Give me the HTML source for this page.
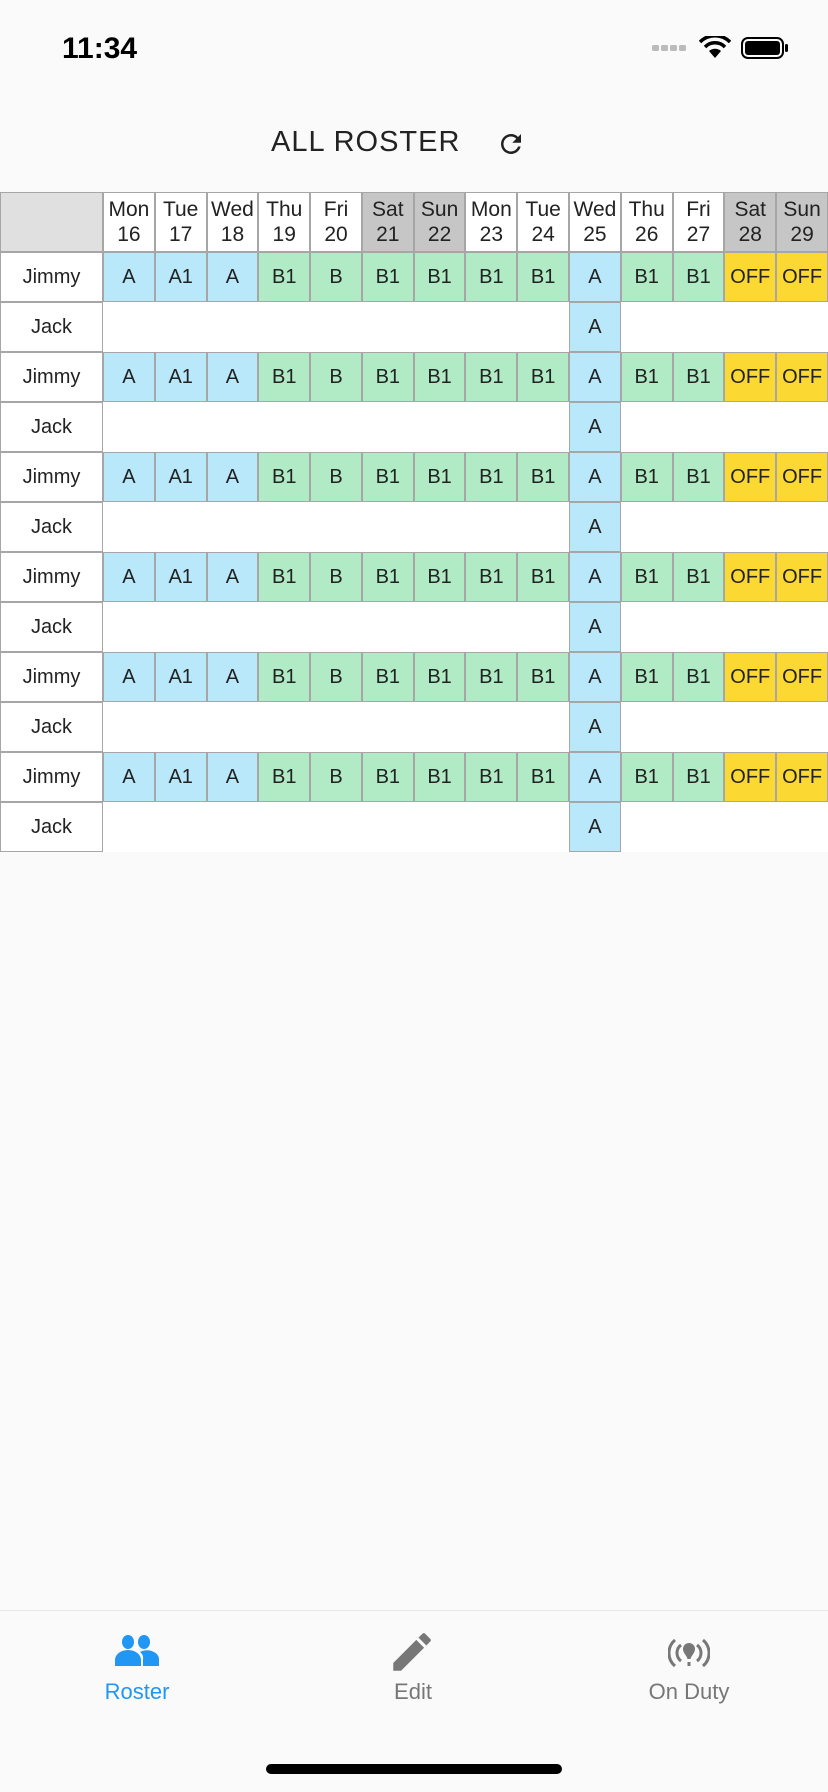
<!DOCTYPE html>
<html><head><meta charset="utf-8">
<style>
*{margin:0;padding:0;box-sizing:border-box}
body{width:828px;height:1792px;background:#fafafa;font-family:"Liberation Sans",sans-serif;position:relative;overflow:hidden;color:#222}
.time{position:absolute;left:62px;top:32px;font-size:30px;font-weight:bold;color:#000}
.title{position:absolute;left:271px;top:126px;font-size:29px;letter-spacing:1px;color:#222}
table{position:absolute;top:192px;left:0;border-collapse:separate;border-spacing:0;table-layout:fixed;width:828px}
td{border:1px solid #a6a6a6;text-align:center;font-size:20px;height:50px;padding:0;color:#222}
tr.h td{height:60px;line-height:25px;font-size:21px;background:#fff}
tr.h td.w{background:#c6c6c6}
tr.h td.c{background:#e0e0e0}
td.n{background:#fff;font-size:20px}
td.a{background:#b8e8fa}
td.b{background:#b1ebc6}
td.o{background:#fbd932}
td.e{background:#fff;border-color:#fff}
.nav{position:absolute;top:1610px;left:0;width:828px;height:182px;border-top:1px solid #e8e8e8;background:#fafafa}
.lbl{position:absolute;top:68px;font-size:22px;transform:translateX(-50%)}
.home{position:absolute;left:266px;top:1764px;width:296px;height:10px;border-radius:5px;background:#000}
</style></head><body>
<div class="time">11:34</div>
<svg style="position:absolute;left:652px;top:40px" width="40" height="12"><g fill="#bbb"><rect x="0" y="5" width="7" height="6" rx="1.5"/><rect x="9" y="5" width="7" height="6" rx="1.5"/><rect x="18" y="5" width="7" height="6" rx="1.5"/><rect x="27" y="5" width="7" height="6" rx="1.5"/></g></svg>
<svg style="position:absolute;left:699px;top:36px" width="32" height="24" viewBox="0 0 32 24"><path d="M16 22 L10 15 A9 9 0 0 1 22 15 Z" fill="#000"/><path d="M6 11 A14 14 0 0 1 26 11" stroke="#000" stroke-width="3.5" fill="none"/><path d="M1 6 A21 21 0 0 1 31 6" stroke="#000" stroke-width="3.5" fill="none"/></svg>
<svg style="position:absolute;left:741px;top:37px" width="48" height="22"><rect x="1" y="1" width="41" height="20" rx="6" fill="none" stroke="#000" stroke-width="2"/><rect x="4" y="4" width="35" height="14" rx="3" fill="#000"/><rect x="44" y="7" width="3" height="8" rx="1.5" fill="#000"/></svg>
<div class="title">ALL ROSTER</div>
<svg style="position:absolute;left:496px;top:129px" width="30" height="30" viewBox="0 0 24 24"><path fill="#222" d="M17.65 6.35A7.958 7.958 0 0 0 12 4c-4.420 0-7.99 3.58-7.99 8s3.57 8 7.99 8c3.73 0 6.84-2.550 7.73-6h-2.080A5.990 5.990 0 0 1 12 18c-3.310 0-6-2.690-6-6s2.690-6 6-6c1.660 0 3.140.69 4.220 1.780L13 11h7V4l-2.350 2.350z"/></svg>
<table>
<colgroup><col style="width:103px"><col span="14" style="width:51.785px"></colgroup>
<tr class="h"><td class="c"></td><td>Mon<br>16</td><td>Tue<br>17</td><td>Wed<br>18</td><td>Thu<br>19</td><td>Fri<br>20</td><td class="w">Sat<br>21</td><td class="w">Sun<br>22</td><td>Mon<br>23</td><td>Tue<br>24</td><td>Wed<br>25</td><td>Thu<br>26</td><td>Fri<br>27</td><td class="w">Sat<br>28</td><td class="w">Sun<br>29</td></tr>
<tr><td class="n">Jimmy</td><td class="a">A</td><td class="a">A1</td><td class="a">A</td><td class="b">B1</td><td class="b">B</td><td class="b">B1</td><td class="b">B1</td><td class="b">B1</td><td class="b">B1</td><td class="a">A</td><td class="b">B1</td><td class="b">B1</td><td class="o">OFF</td><td class="o">OFF</td></tr>
<tr><td class="n">Jack</td><td class="e" colspan="9"></td><td class="a">A</td><td class="e" colspan="4"></td></tr>
<tr><td class="n">Jimmy</td><td class="a">A</td><td class="a">A1</td><td class="a">A</td><td class="b">B1</td><td class="b">B</td><td class="b">B1</td><td class="b">B1</td><td class="b">B1</td><td class="b">B1</td><td class="a">A</td><td class="b">B1</td><td class="b">B1</td><td class="o">OFF</td><td class="o">OFF</td></tr>
<tr><td class="n">Jack</td><td class="e" colspan="9"></td><td class="a">A</td><td class="e" colspan="4"></td></tr>
<tr><td class="n">Jimmy</td><td class="a">A</td><td class="a">A1</td><td class="a">A</td><td class="b">B1</td><td class="b">B</td><td class="b">B1</td><td class="b">B1</td><td class="b">B1</td><td class="b">B1</td><td class="a">A</td><td class="b">B1</td><td class="b">B1</td><td class="o">OFF</td><td class="o">OFF</td></tr>
<tr><td class="n">Jack</td><td class="e" colspan="9"></td><td class="a">A</td><td class="e" colspan="4"></td></tr>
<tr><td class="n">Jimmy</td><td class="a">A</td><td class="a">A1</td><td class="a">A</td><td class="b">B1</td><td class="b">B</td><td class="b">B1</td><td class="b">B1</td><td class="b">B1</td><td class="b">B1</td><td class="a">A</td><td class="b">B1</td><td class="b">B1</td><td class="o">OFF</td><td class="o">OFF</td></tr>
<tr><td class="n">Jack</td><td class="e" colspan="9"></td><td class="a">A</td><td class="e" colspan="4"></td></tr>
<tr><td class="n">Jimmy</td><td class="a">A</td><td class="a">A1</td><td class="a">A</td><td class="b">B1</td><td class="b">B</td><td class="b">B1</td><td class="b">B1</td><td class="b">B1</td><td class="b">B1</td><td class="a">A</td><td class="b">B1</td><td class="b">B1</td><td class="o">OFF</td><td class="o">OFF</td></tr>
<tr><td class="n">Jack</td><td class="e" colspan="9"></td><td class="a">A</td><td class="e" colspan="4"></td></tr>
<tr><td class="n">Jimmy</td><td class="a">A</td><td class="a">A1</td><td class="a">A</td><td class="b">B1</td><td class="b">B</td><td class="b">B1</td><td class="b">B1</td><td class="b">B1</td><td class="b">B1</td><td class="a">A</td><td class="b">B1</td><td class="b">B1</td><td class="o">OFF</td><td class="o">OFF</td></tr>
<tr><td class="n">Jack</td><td class="e" colspan="9"></td><td class="a">A</td><td class="e" colspan="4"></td></tr>
</table>
<div class="nav">
<svg style="position:absolute;left:115px;top:24px" width="44" height="32" viewBox="0 0 44 32"><g fill="#2196f3"><ellipse cx="13" cy="7" rx="6" ry="7"/><ellipse cx="29" cy="7" rx="6" ry="7"/><path d="M0 31 V25 A13 10 0 0 1 26 25 V31 Z"/><path d="M28 31 V24 A10 8 0 0 0 25 17 A12 9 0 0 1 44 25 V31 Z"/></g></svg>
<div class="lbl" style="left:137px;color:#2196f3">Roster</div>
<svg style="position:absolute;left:387px;top:16px" width="50" height="50" viewBox="0 0 24 24"><path fill="#777" d="M3 17.25V21h3.75L17.81 9.94l-3.75-3.75L3 17.25zM20.71 7.04a1 1 0 0 0 0-1.41l-2.34-2.34a1 1 0 0 0-1.41 0l-1.830 1.830 3.750 3.750 1.830-1.830z"/></svg>
<div class="lbl" style="left:413px;color:#777">Edit</div>
<svg style="position:absolute;left:668px;top:26px" width="42" height="34" viewBox="0 0 42 34"><g fill="none" stroke="#777" stroke-width="3"><path d="M7 3 A17 17 0 0 0 7 29"/><path d="M13 8 A10 10 0 0 0 13 24"/><path d="M35 3 A17 17 0 0 1 35 29"/><path d="M29 8 A10 10 0 0 1 29 24"/></g><path fill="#777" d="M21 6 A6 6 0 0 1 27 12 C27 16 23 19 22.5 22 H19.5 C19 19 15 16 15 12 A6 6 0 0 1 21 6Z"/><rect x="19.5" y="25" width="3" height="4" fill="#777"/></svg>
<div class="lbl" style="left:689px;color:#777">On Duty</div>
</div>
<div class="home"></div>
</body></html>
